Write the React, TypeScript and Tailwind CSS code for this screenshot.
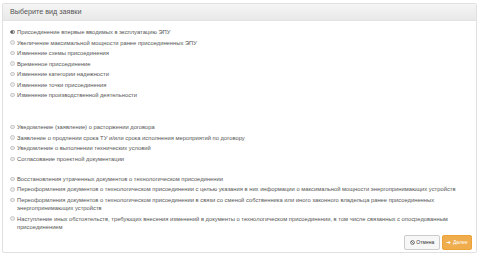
import React from "react";

const group1 = [
  "Присоединение впервые вводимых в эксплуатацию ЭПУ",
  "Увеличение максимальной мощности ранее присоединенных ЭПУ",
  "Изменение схемы присоединения",
  "Временное присоединение",
  "Изменение категории надежности",
  "Изменение точки присоединения",
  "Изменение производственной деятельности",
];
const group2 = [
  "Уведомление (заявление) о расторжении договора",
  "Заявление о продлении срока ТУ и/или срока исполнения мероприятий по договору",
  "Уведомление о выполнении технических условий",
  "Согласование проектной документации",
];
const group3 = [
  "Восстановления утраченных документов о технологическом присоединении",
  "Переоформления документов о технологическом присоединении с целью указания в них информации о максимальной мощности энергопринимающих устройств",
  "Переоформления документов о технологическом присоединении в связи со сменой собственника или иного законного владельца ранее присоединенных энергопринимающих устройств",
  "Наступление иных обстоятельств, требующих внесения изменений в документы о технологическом присоединении, в том числе связанных с опосредованным присоединением",
];

function Row({ text, checked }: { text: string; checked?: boolean }) {
  return (
    <div className="flex items-start gap-[2.5px]">
      <span
        className={
          "mt-[1.8px] flex h-[4.5px] w-[4.5px] shrink-0 items-center justify-center rounded-full border-[0.5px] " +
          (checked ? "border-[#888] bg-[#eee]" : "border-[#c8c8c8] bg-[#ececec]")
        }
      >
        {checked && <span className="h-[2px] w-[2px] rounded-full bg-[#444]" />}
      </span>
      <span className="text-[5.8px] leading-[8px] text-[#555]">{text}</span>
    </div>
  );
}

export default function App() {
  return (
    <div
      className="h-[258px] w-[480px] bg-white pl-[2px] pt-[3px]"
      style={{ fontFamily: '"Liberation Sans", Arial, sans-serif' }}
    >
      <div className="flex h-[250px] w-[475px] flex-col rounded-[2px] border border-[#e0e0e0]">
        <div className="flex h-[17px] items-center border-b border-[#e2e2e2] bg-gradient-to-b from-[#f5f5f5] to-[#e9e9e9] pl-[7px] text-[7.2px] text-[#555]">
          Выберите вид заявки
        </div>
        <div className="flex flex-1 flex-col pl-[7px] pr-[4px] pt-[7px]">
          <div className="flex flex-col gap-[2.5px]">
            {group1.map((t, i) => (
              <Row key={t} text={t} checked={i === 0} />
            ))}
          </div>
          <div className="mt-[24px] flex flex-col gap-[2.6px]">
            {group2.map((t) => (
              <Row key={t} text={t} />
            ))}
          </div>
          <div className="mt-[12px] flex flex-col gap-[2.6px] pr-[12px]">
            {group3.map((t) => (
              <Row key={t} text={t} />
            ))}
          </div>
          <div className="mt-auto mb-[2px] flex justify-end gap-[2px]">
            <button className="flex h-[15px] w-[36px] items-center justify-center gap-[1.5px] rounded-[2px] border border-[#ccc] bg-[#f7f7f7] text-[5px] text-[#333]">
              <svg width="5" height="5" viewBox="0 0 10 10">
                <circle cx="5" cy="5" r="3.8" fill="none" stroke="#444" strokeWidth="1.4" />
                <line x1="2.4" y1="2.4" x2="7.6" y2="7.6" stroke="#444" strokeWidth="1.4" />
              </svg>
              Отмена
            </button>
            <button className="flex h-[15px] w-[30px] items-center justify-center gap-[1.5px] rounded-[2px] border border-[#eea236] bg-[#f0ad4e] text-[5px] text-white">
              <svg width="5" height="5" viewBox="0 0 10 10">
                <path d="M1 4h4.5V1.5L9.5 5 5.5 8.5V6H1z" fill="white" />
              </svg>
              Далее
            </button>
          </div>
        </div>
      </div>
    </div>
  );
}
